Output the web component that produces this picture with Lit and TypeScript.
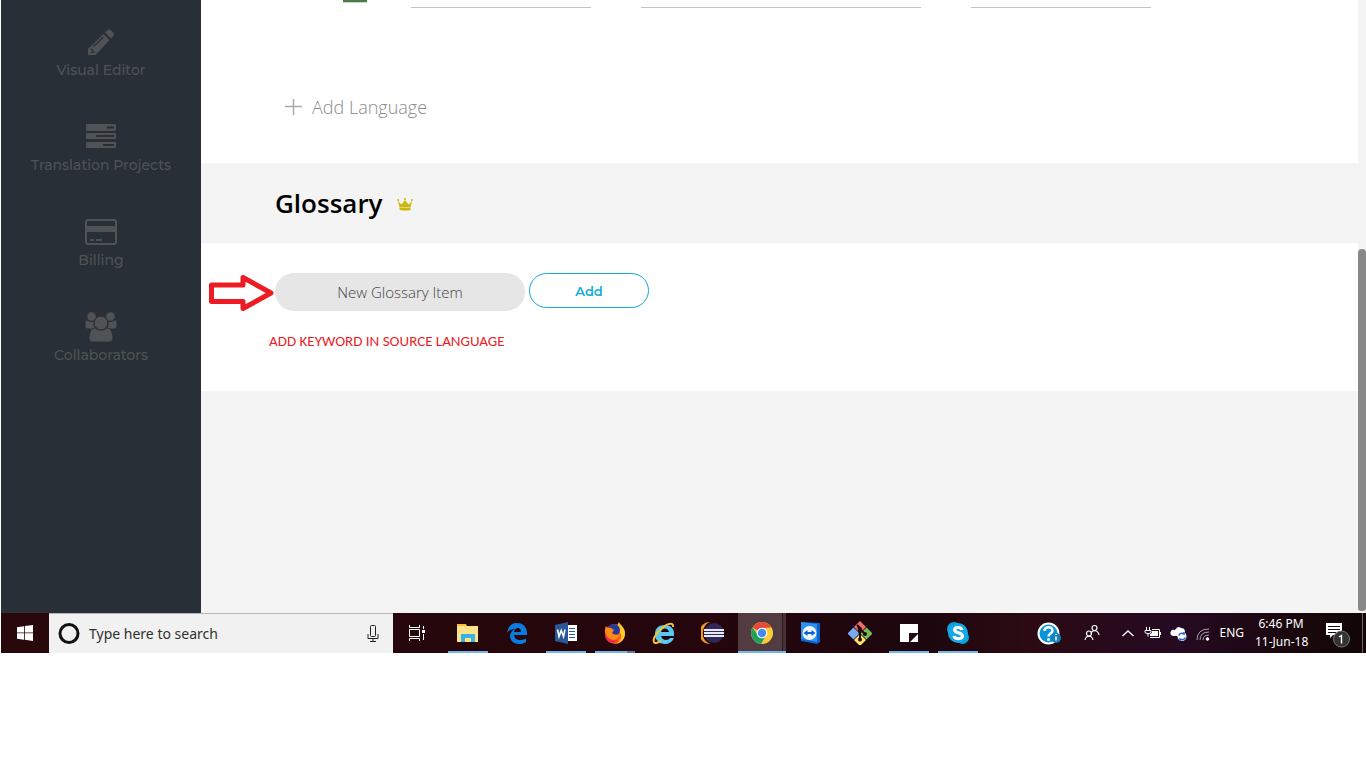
import { LitElement, html, css, svg } from "lit";
import { customElement } from "lit/decorators.js";

const pencil = html`<svg width="34" height="30" viewBox="0 0 34 30" aria-hidden="true"><path fill="currentColor" d="M5 20 19.500 6 25.500 12 11.500 27H4V21zM21 4.500 23.500 2Q25 .8 26.500 2L29.500 5Q31 6.500 29.500 8L27 10.500z"/><path d="m9.500 18.500 10-9.500M6.500 21l2 1 .5 2 2 .5M7 24l1 1" fill="none" stroke="#282f36" stroke-width="1.200"/></svg>`;

const projects = html`<svg width="34" height="30" viewBox="0 0 34 30" aria-hidden="true"><g fill="currentColor"><rect x="2" y="1" width="30" height="7" rx="1"/><rect x="2" y="10" width="30" height="6" rx="1"/><rect x="2" y="19" width="30" height="6" rx="1"/></g><path d="M23 4.500h7M12 13h18M19 22h11" stroke="#282f36" stroke-width="2"/></svg>`;

const card = html`<svg width="34" height="30" viewBox="0 0 34 30" aria-hidden="true"><rect x="2" y="2" width="30" height="24" rx="2" fill="none" stroke="currentColor" stroke-width="2"/><path fill="currentColor" d="M2 8h30v6H2zM6 21h4v2H6zm6 0h6v2h-6z"/></svg>`;

const people = html`<svg width="34" height="32" viewBox="0 0 34 32" aria-hidden="true"><g fill="currentColor" stroke="#282f36" stroke-width=".8"><path d="M1 12q0-3 2-3 4 2.500 7 1-1 5 2 8H4q-3 0-3-3zM33 12q0-3-2-3-4 2.500-7 1 1 5-2 8h8q3 0 3-3z"/><circle cx="7.500" cy="5.500" r="4.700"/><circle cx="26.500" cy="5.500" r="4.700"/><path d="M11 17q6 4.500 12 0 5 0 6 9 .5 5-4 5H9q-4.500 0-4-5 1-9 6-9z"/><circle cx="17" cy="12" r="6.800"/></g></svg>`;

const explorer = svg`<path fill="#f3bd3e" d="M0 2h9l1 2h11v3H0z"/><path fill="#fde28a" d="M0 4h21v16H0z"/><path fill="#f3bd3e" d="M1 3h7v1H1z"/><path fill="#36b3e6" d="M4 12h14v8h-4v-4H8v4H4z"/>`;
const edge = svg`<path fill="#0a7be0" d="M1 11C2 4 6 1 11 1c7 0 10 5 10 10v2H8c0 3 3 5 6 5 2 0 4-.5 6-1.500V20c-2 1.500-4 2-7 2-6 0-9-4-9-8 0-3 2-5.500 5-7-4 0-7 2-8 4zm7-1h7c0-2-1-4-3-4s-4 2-4 4z"/>`;
const word = svg`<path fill="#fff" d="M12 3h10v16H12z"/><path stroke="#2b579a" d="M14 6.500h6M14 9.500h6M14 12.500h6M14 15.500h6"/><path fill="#2b579a" d="M0 3 13 0v22L0 19z"/><path fill="none" stroke="#fff" stroke-width="1.600" d="m2.500 7.500 1.500 7 2.200-6 2.300 6 1.500-7"/>`;
const firefox = svg`<circle cx="11" cy="12" r="10" fill="#ff5b1a"/><path fill="#ffc928" d="M15 0c1 3 6 5 6 11 0 7-5 10-9 11 6-4 6-8 4-12-2-3-4-5-1-10z"/><circle cx="10" cy="8" r="6" fill="#273a9c"/><path fill="#ff8a16" d="M2 4c1 2 3 2 5 2l3 2-2 3c2 2 5 2 8 1-1 5-8 8-12 4C1 13 0 8 2 4z"/><path fill="#f02b47" d="M1 10c2 7 7 9 13 8-3 5-14 4-13-8z"/>`;
const explorerWeb = svg`<path fill="#59c9f4" d="M2 12C2 6 6 3 12 3s10 4 9 11H8c1 3 3 4 5 4 2 0 3-1 4-2h4c-2 4-5 6-9 6C6 22 2 18 2 12zm6-2h8c-.5-2-2-3.500-4-3.500S8.500 8 8 10z"/><path fill="none" stroke="#f5c52b" stroke-width="2" d="M20 5c1-5-6-4-12 2C1 13-1 20 2 21c2 .5 4-1 6-2"/>`;
const eclipse = svg`<path fill="#f39a21" d="M8 0A10.800 10.800 0 0 0 8 22 12 12 0 0 1 8 0z"/><circle cx="12" cy="11" r="10" fill="#2f2858"/><path fill="#e8e8f4" d="M2 7h20v2H2zm0 3h20v2H2zm0 3h20v2H2z"/>`;
const chrome = svg`<circle cx="11" cy="11" r="11" fill="#fccd34"/><path fill="#e24a3b" d="M11 11 1.500 5.500A11 11 0 0 1 20.500 5.500L11 6z"/><path fill="#23a05b" d="M1.500 5.500A11 11 0 0 0 10 22l5-8.500-8-.5z"/><circle cx="11" cy="11" r="5.300" fill="#fff"/><circle cx="11" cy="11" r="4.200" fill="#4389f2"/>`;
const teamviewer = svg`<path fill="#0b62cf" d="M1 0 20 1v19l-3 2-16-3z"/><path fill="#2a90f2" d="m1 0 16 2v18L1 17z"/><circle cx="9.500" cy="11" r="7" fill="#f1f7ff"/><path fill="#0b62cf" d="m3.500 11 4-3v2h4V8l4 3-4 3v-2h-4v2z"/>`;
const git = svg`<g transform="translate(-1 0)"><path fill="#ef6a6e" d="m12-1 6 6-6 6-6-6z"/><path fill="#79a9f2" d="m5.500 5.500 6 6-6 6-6-6z"/><path fill="#75bd56" d="m18.500 5.500 6 6-6 6-6-6z"/><path fill="#ffdf70" d="m12 12 6 6-6 6-6-6z"/><path d="M9 3 12 6v12M12 7l5 5" stroke="#26090c" stroke-width="2"/><circle cx="12" cy="7" r="2" fill="#26090c"/><circle cx="12" cy="17.500" r="2" fill="#26090c"/><circle cx="17" cy="12" r="2" fill="#26090c"/></g>`;
const note = svg`<path fill="#fff" d="M2 2h18v18H2z"/><path fill="#26090c" d="M11 11h9v9h-9z"/><path fill="#fff" d="M12 20l8-8v8z"/>`;
const skype = svg`<circle cx="7" cy="7" r="7" fill="#0a9fdd"/><circle cx="15.500" cy="15.500" r="6.500" fill="#0a9fdd"/><circle cx="11" cy="11" r="10" fill="#12a9e5"/><path fill="none" stroke="#fff" stroke-width="3" d="M15 8C14.500 4.500 7.500 4.500 7.500 8c0 3.500 8 2 8 6 0 3.500-8 3.500-8.500 0"/>`;

const apps = [
  { name: "File Explorer", art: explorer, state: "open" },
  { name: "Edge", art: edge, state: "" },
  { name: "Word", art: word, state: "open" },
  { name: "Firefox", art: firefox, state: "stacked" },
  { name: "Internet Explorer", art: explorerWeb, state: "" },
  { name: "Eclipse", art: eclipse, state: "" },
  { name: "Chrome", art: chrome, state: "open active" },
  { name: "TeamViewer", art: teamviewer, state: "" },
  { name: "Git", art: git, state: "" },
  { name: "Sticky Notes", art: note, state: "open" },
  { name: "Skype", art: skype, state: "open" },
];

@customElement("side-nav")
class SideNav extends LitElement {
  static styles = css`
    :host { display: block; flex: 0 0 200px; background: #282f36; }
    .list { display: flex; flex-direction: column; }
    .item { display: flex; flex-direction: column; align-items: center; justify-content: flex-end; gap: 2px; height: 95px; box-sizing: border-box; color: #505255; text-decoration: none; font: 500 14px/20px Montserrat, Inter, sans-serif; }
    .item:first-child { height: 80px; }
    svg { display: block; }
  `;
  render() {
    return html`<nav class="list">
      <a class="item" href="#editor">${pencil}<span>Visual Editor</span></a>
      <a class="item" href="#projects">${projects}<span>Translation Projects</span></a>
      <a class="item" href="#billing">${card}<span>Billing</span></a>
      <a class="item" href="#collaborators">${people}<span>Collaborators</span></a>
    </nav>`;
  }
}

@customElement("task-bar")
class TaskBar extends LitElement {
  static styles = css`
    :host { display: flex; height: 40px; color: #fff; background: linear-gradient(90deg, #28080b 0, #25060c 50%, #1d070e 68%, #2b0a12 75%, #250a22 86%, #19070c 95%, #120608 100%); font: 12px/18px "Noto Sans", sans-serif; }
    button { display: flex; align-items: center; justify-content: center; padding: 0; border: 0; color: inherit; background: none; font: inherit; }
    svg { display: block; }
    .start { width: 48px; }
    .search { display: flex; align-items: center; gap: 8px; width: 344px; box-sizing: border-box; padding: 0 12px 0 8px; border-top: 1px solid #b9b4b4; background: #f1f1f1; }
    .search input { flex: 1; min-width: 0; padding: 0; border: 0; outline: 0; background: none; font: 14px/20px "Noto Sans", sans-serif; }
    .search input::placeholder { color: #303030; opacity: 1; }
    .view { width: 48px; }
    .apps { display: flex; gap: 9px; padding-left: 7px; }
    .app { width: 40px; }
    .open { box-shadow: inset 0 -2px #76b4ec; }
    .stacked { background: linear-gradient(90deg, #76b4ec 32px, #567e9f 32px) bottom / 100% 2px no-repeat; }
    .active { width: 48px; margin: 0 -4px; background: linear-gradient(90deg, #523c42 44px, #2d171d 44px, #2d171d 45px, #46323a 45px); }
    .tray { display: flex; margin-left: auto; align-items: center; }
    .help { margin-right: 22px; }
    .contacts { margin-right: 21px; }
    .status { display: flex; align-items: center; gap: 9px; margin-right: 11px; }
    .clock { width: 52px; margin-right: 2px; text-align: center; white-space: nowrap; }
    .notes { width: 54px; height: 40px; border-right: 1px solid #6d6668; margin-right: 3px; }
  `;
  render() {
    return html`
      <button class="start" aria-label="Start"><svg width="16" height="16" viewBox="0 0 16 16" fill="#fff"><path d="M0 2.300 7 1.200V7.500H0zM7.800 1 16 0v7.500H7.800zM0 8.300h7v6.400l-7-1zM7.800 8.300H16V16l-8.200-1.200z"/></svg></button>
      <label class="search"><svg width="24" height="24" viewBox="0 0 24 24" aria-hidden="true"><circle cx="12" cy="11.500" r="9" fill="none" stroke="#111" stroke-width="3"/></svg><input aria-label="Type here to search" placeholder="Type here to search"><svg width="16" height="20" viewBox="0 0 16 20" fill="none" stroke="#222"><rect x="5.500" y="1.500" width="5" height="11" rx="1"/><path d="M3 10v4.500h10V10M8 14.500v3M5 17.500h6"/></svg></label>
      <button class="view" aria-label="Task view"><svg width="18" height="18" viewBox="0 0 18 18" fill="none" stroke="#fff"><path d="M1.500 1v2.500h10V1M1.500 17v-2.500h10V17M1.500 5.500h10v7h-10zM15.500 2v3M15.500 10v6"/><path fill="#fff" stroke="none" d="M14 6h3v3h-3z"/></svg></button>
      <div class="apps">${apps.map((a) => html`<button class="app ${a.state}" aria-label=${a.name}><svg width="24" height="24" viewBox="-1 -1 24 24">${a.art}</svg></button>`)}</div>
      <div class="tray">
        <svg class="help" width="25" height="24" viewBox="0 0 25 24"><circle cx="11.500" cy="12.500" r="10" fill="#0996d8" stroke="#fff" stroke-width="2"/><path d="M7.500 10c0-5 8-5 8-.5 0 3-4 3-4 6" fill="none" stroke="#fff" stroke-width="2.500"/><circle cx="11.500" cy="18.500" r="1.500" fill="#fff"/><circle cx="19" cy="17" r="5" fill="#1482bd"/><path d="M19 15.500v4M19 13v1" stroke="#fff" stroke-width="1.500"/></svg>
        <svg class="contacts" width="16" height="18" viewBox="0 0 16 18" fill="none" stroke="#fff" stroke-width="1.200"><circle cx="10.500" cy="4" r="2.500"/><path d="M7 10c.5-4.500 7-4.500 8 1"/><circle cx="5" cy="9.500" r="2.500"/><path d="M1 16c1-5 7-5 8 0"/></svg>
        <div class="status">
          <svg width="14" height="16" viewBox="0 0 14 16"><path d="m1.500 11 5.500-5 5.500 5" fill="none" stroke="#fff" stroke-width="1.300"/></svg>
          <svg width="17" height="16" viewBox="0 0 17 16" fill="none" stroke="#fff"><path d="M2.500 2v3M5.500 2v3M1 5.500h6v2l-2 1H3l-2-1zM4 8v3.500M6 12.500h9.500v-8H8"/><path fill="#fff" stroke="none" d="M8 6h6v5H6V9l2-1zM16 7h1v3h-1z"/></svg>
          <svg width="17" height="16" viewBox="0 0 17 16"><path fill="#fff" d="M3 11q-4-1-2-5 1-2 4-1 3-5 6-2 4 0 4 4v4z"/><circle cx="12" cy="11.500" r="4.500" fill="#fff"/><path d="M8.500 10.500q2-3.500 5.500-1.500V7M15.500 12.500q-2 3.500-5.500 1.500V16" fill="none" stroke="#2862c8" stroke-width="1.500"/></svg>
          <svg width="14" height="16" viewBox="0 0 14 16" fill="none" stroke="#aaa3a8"><path d="M1 15Q1 4 13 4M4 15Q4 7 13 7M7 15q0-5 6-5"/><circle cx="11.500" cy="14" r="1.300" fill="#fff" stroke="#fff"/></svg>
          <span>ENG</span>
        </div>
        <div class="clock">6:46 PM<br>11-Jun-18</div>
        <button class="notes" aria-label="1 notification"><svg width="28" height="32" viewBox="-3 -4 28 32"><path fill="#fff" d="M1 2h16v12H8l-3 3v-3H1z"/><path d="M3 5.500h12M3 8.500h12M3 11.500h8" stroke="#1b090e"/><circle cx="16.500" cy="18" r="8" fill="#333" stroke="#777"/><path d="m14 16 2.500-1.500v8" fill="none" stroke="#fff" stroke-width="1.400"/></svg></button>
      </div>`;
  }
}

@customElement("app-root")
class AppRoot extends LitElement {
  static styles = css`
    :host { display: block; min-height: 100vh; background: #fff; padding-left: 1px; box-sizing: border-box; font-family: "Open Sans", sans-serif; }
    .screen { display: flex; }
    .main { flex: 1; min-width: 0; background: #f4f4f4; padding-bottom: 222px; }
    .languages { background: #fff; padding-bottom: 41px; }
    .row { display: flex; align-items: flex-start; height: 8px; gap: 50px; padding-left: 142px; }
    .flag { width: 24px; height: 2px; margin-right: -6px; background: #4c7d47; border-bottom: 1px solid #c9d6c8; }
    .field { box-sizing: border-box; width: 180px; height: 8px; padding: 0; border: 0; border-bottom: 1px solid #c2c2c2; background: none; outline: 0; }
    .wide { width: 280px; }
    .new { display: flex; align-items: center; gap: 10px; margin: 84px 0 0 84px; height: 30px; padding: 0; border: 0; background: none; color: #8c8c8c; font: 300 18px/30px "Open Sans", sans-serif; }
    .heading { display: flex; align-items: center; gap: 14px; height: 80px; padding-left: 74px; }
    h1 { margin: 0; font: 600 26px/36px "Open Sans", sans-serif; color: #000; }
    .glossary { position: relative; background: #fff; padding: 30px 0 40px 68px; }
    .form { display: flex; align-items: flex-start; gap: 4px; padding-left: 6px; }
    .term { box-sizing: border-box; width: 250px; height: 38px; padding: 0 20px; border: 0; border-radius: 19px; background: #e6e6e6; text-align: center; font: 300 15px/38px "Open Sans", sans-serif; }
    .term::placeholder { color: #444; opacity: 1; }
    .add { box-sizing: border-box; width: 120px; height: 35px; padding: 0; border: 1px solid #12abdb; border-radius: 18px; background: #fff; color: #12abdb; font: 600 13px/20px Montserrat, Inter, sans-serif; }
    .hint { margin: 20px 0 0; color: #ed1c24; font: 15px/20px Carlito, "Noto Sans", sans-serif; }
    .arrow { position: absolute; left: 7px; top: 30px; }
    .rail { display: flex; flex-direction: column; flex: 0 0 8px; background: #f4f4f4; }
    .thumb { height: 362px; margin: auto 0 2px; border-radius: 4px 4px 3px 3px; background: #888; }
    svg { display: block; }
  `;
  render() {
    return html`
      <div class="screen">
        <side-nav></side-nav>
        <main class="main">
          <section class="languages">
            <div class="row"><span class="flag"></span><input class="field" aria-label="Language"><input class="field wide" aria-label="Language name"><input class="field" aria-label="Language code"></div>
            <button class="new"><svg width="17" height="17" viewBox="0 0 17 17"><path d="M8.500 0v16M0 7.500h17" stroke="#aaa" stroke-width="1.500"/></svg>Add Language</button>
          </section>
          <header class="heading"><h1>Glossary</h1><svg width="16" height="18" viewBox="0 0 16 18" fill="#cdb70d"><path d="M1 7 4.500 10.500 8 6l3.500 4.500L15 7l-1.500 6.500h-11zM2.500 14h11v2q-5.500 1-11 0z"/><circle cx="1.200" cy="6" r="1"/><circle cx="8" cy="5" r="1.100"/><circle cx="14.800" cy="6" r="1"/></svg></header>
          <section class="glossary">
            <form class="form"><input class="term" aria-label="New Glossary Item" placeholder="New Glossary Item"><button class="add" type="button">Add</button></form>
            <p class="hint">ADD KEYWORD IN SOURCE LANGUAGE</p>
            <svg class="arrow" width="68" height="42" viewBox="0 0 68 42" aria-hidden="true"><path d="M3.500 12H35V4.500L63 20 35 35.500V28.500H3.500z" fill="none" stroke="#ed1c24" stroke-width="5" stroke-linejoin="round"/></svg>
          </section>
        </main>
        <div class="rail"><div class="thumb"></div></div>
      </div>
      <task-bar></task-bar>`;
  }
}
